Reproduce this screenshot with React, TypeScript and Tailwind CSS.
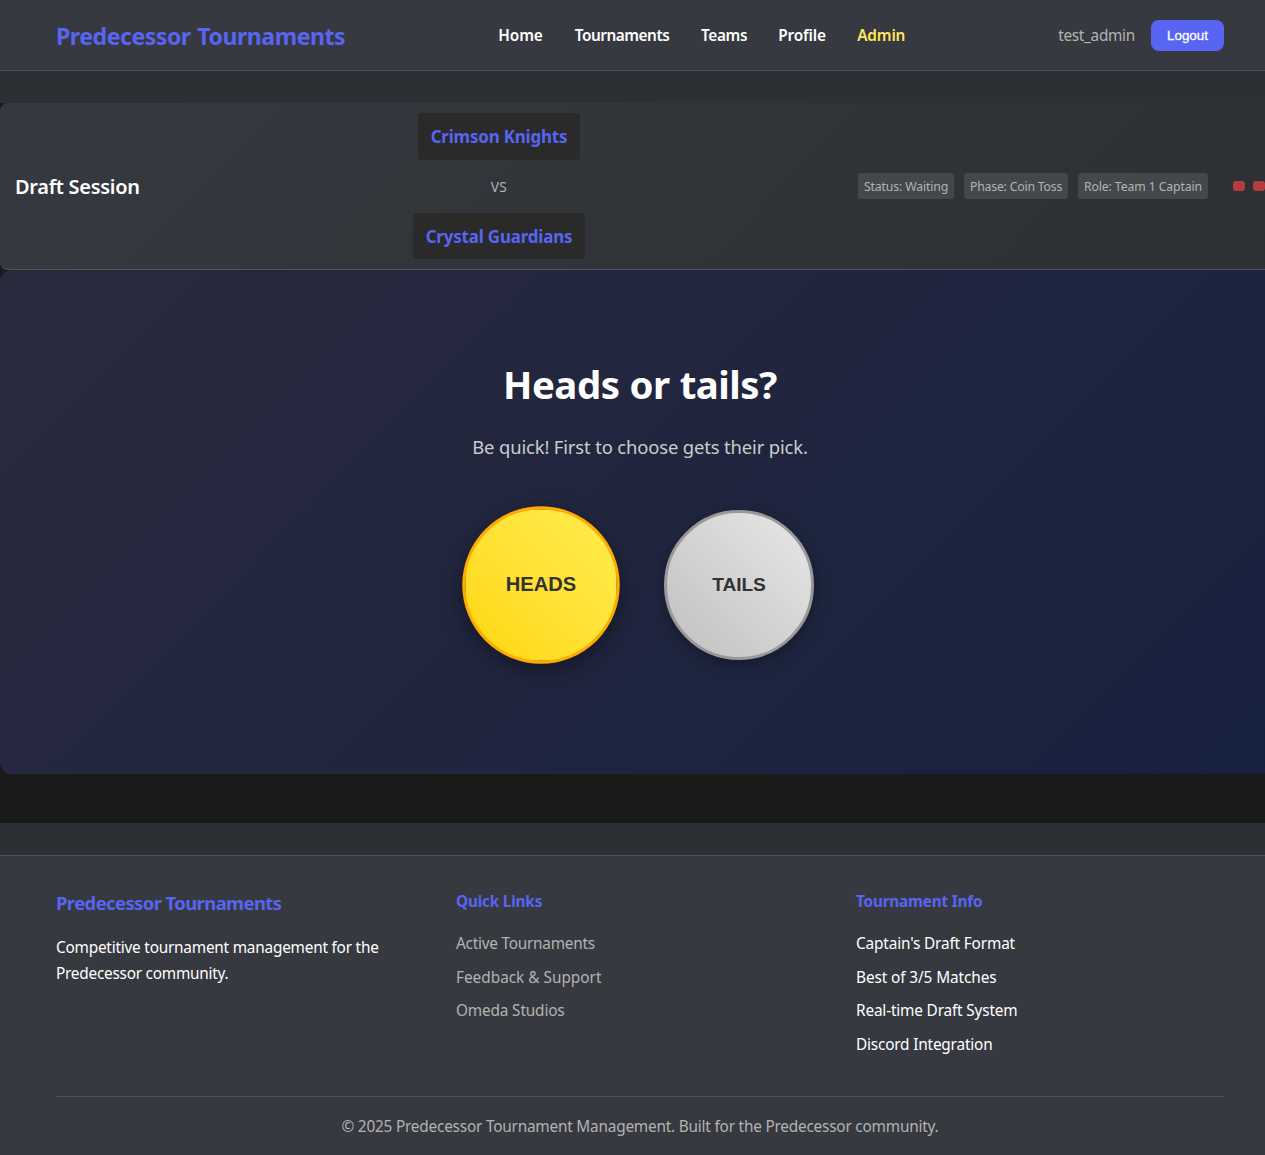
type Item = { text: string; className: string };

const navLinks: Item[] = [
  { text: 'Home', className: 'text-white tracking-[-0.105px] w-[44.4px]' },
  { text: 'Tournaments', className: 'text-white tracking-[-0.47px] w-[94.4px]' },
  { text: 'Teams', className: 'text-white tracking-[-0.39px] w-[45.2px]' },
  { text: 'Profile', className: 'text-white tracking-[-0.166px] w-[46.9px]' },
  { text: 'Admin', className: 'text-[#fee75c] tracking-[-0.15px] w-[47.7px]' },
];

const statuses: Item[] = [
  { text: 'Status: Waiting', className: 'w-[96px] tracking-[-0.155px]' },
  { text: 'Phase: Coin Toss', className: 'w-[104px] tracking-[-0.212px]' },
  { text: 'Role: Team 1 Captain', className: 'w-[130px] tracking-[-0.123px]' },
];

const quickLinks: Item[] = [
  { text: 'Active Tournaments', className: 'tracking-[-0.24px]' },
  { text: 'Feedback & Support', className: 'tracking-[-0.01px]' },
  { text: 'Omeda Studios', className: 'tracking-[-0.16px]' },
];

const info: Item[] = [
  { text: "Captain's Draft Format", className: 'tracking-[-0.155px]' },
  { text: 'Best of 3/5 Matches', className: 'tracking-[-0.1px]' },
  { text: 'Real-time Draft System', className: 'tracking-[-0.165px]' },
  { text: 'Discord Integration', className: 'tracking-[-0.185px]' },
];

function SiteHeader() {
  return (
    <header className="h-[71px] border-b border-[#4f545c] bg-[#36393f]">
      <div className="mx-auto flex h-[70px] w-[1168px] items-center justify-between pt-px">
        <div className="w-[289px] text-[23.04px] leading-[38px] font-bold tracking-[-0.45px] [word-spacing:1px] whitespace-nowrap text-[#5865f2]">
          Predecessor Tournaments
        </div>
        <nav className="flex gap-8 text-[15.36px] leading-[26px] font-semibold">
          {navLinks.map((l) => (
            <a key={l.text} className={l.className}>{l.text}</a>
          ))}
        </nav>
        <div className="flex items-center gap-4">
          <span className="text-[15.36px] leading-[26px] tracking-[-0.3px] text-[#b3b3b3]">test_admin</span>
          <button className="h-[31px] w-[73px] rounded-lg bg-[#5865f2] font-['Liberation_Sans',sans-serif] text-[13.33px] font-medium text-white [-webkit-text-stroke:0.3px_white]">
            Logout
          </button>
        </div>
      </div>
    </header>
  );
}

function DraftHeader() {
  return (
    <section className="flex h-[167px] items-center justify-between rounded-lg border-b border-[#4f545c] bg-linear-135 from-[#36393f] to-[#2c2f33] px-[15px]">
      <h1 className="w-[125px] pt-0.5 text-[19.97px] leading-8 font-semibold tracking-[-0.27px] whitespace-nowrap text-white">Draft Session</h1>
      <div className="flex flex-col items-center gap-[15px] font-bold text-[#5865f2]">
        <div className="flex h-[46.5px] w-[162px] items-center justify-center rounded bg-[#2a2a2a] text-[16.9px] tracking-[-0.153px]">
          Crimson Knights
        </div>
        <span className="text-[13.8px] leading-[23px] font-normal tracking-[0.4px] text-[#b3b3b3]">VS</span>
        <div className="flex h-[46.5px] w-[172px] items-center justify-center rounded bg-[#2a2a2a] pt-px text-[16.9px] tracking-[-0.147px]">
          Crystal Guardians
        </div>
      </div>
      <div className="flex items-center gap-[25px]">
        <div className="flex gap-2.5 text-[12.29px] text-[#b3b3b3]">
          {statuses.map((s) => (
            <span key={s.text} className={`flex h-[26px] items-center justify-center rounded-[3px] bg-[#44474b] pt-0.5 whitespace-nowrap ${s.className}`}>
              {s.text}
            </span>
          ))}
        </div>
        <div className="flex gap-2">
          <span className="h-2.5 w-3 rounded-[3px] bg-[#b53c3e]" />
          <span className="h-2.5 w-3 rounded-[3px] bg-[#b53c3e]" />
        </div>
      </div>
    </section>
  );
}

function CoinToss() {
  return (
    <section className="flex h-[504px] flex-col items-center rounded-xl bg-linear-135 from-[#2a2a3e] to-[#16213e] pt-[82px]">
      <h2 className="text-[38.4px] leading-[64px] font-bold tracking-[-0.48px] [word-spacing:0.5px] text-white">Heads or tails?</h2>
      <p className="mt-[15px] text-[18.43px] leading-[31px] tracking-[-0.145px] text-[#cccccc]">
        Be quick! First to choose gets their pick.
      </p>
      <div className="mt-12 flex gap-12 font-['Liberation_Sans',sans-serif] text-[19.2px] font-bold text-[#333333]">
        <button className="size-[150px] scale-105 rounded-full border-[3px] border-[#ffaa00] bg-linear-45 from-[#ffd700] to-[#ffed4e] shadow-[0_6px_20px_rgba(0,0,0,0.4)]">
          HEADS
        </button>
        <button className="size-[150px] rounded-full border-[3px] border-[#999999] bg-linear-45 from-[#c0c0c0] to-[#e8e8e8] tracking-[-0.15px] shadow-[0_4px_15px_rgba(0,0,0,0.3)]">
          TAILS
        </button>
      </div>
    </section>
  );
}

function SiteFooter() {
  return (
    <footer className="h-[300px] border-t border-[#4f545c] bg-[#36393f] text-[15.36px] text-white">
      <div className="mx-auto w-[1168px] pt-8">
        <div className="grid h-[208px] grid-cols-3 gap-8">
          <div>
            <h3 className="text-[18.43px] leading-[29px] font-bold tracking-[-0.58px] text-[#5865f2]">Predecessor Tournaments</h3>
            <p className="mt-[18px] leading-[26px]">
              <span className="block tracking-[-0.22px]">Competitive tournament management for the</span>
              <span className="block tracking-[-0.24px]">Predecessor community.</span>
            </p>
          </div>
          <div className="pt-px">
            <h4 className="leading-[26px] font-bold tracking-[-0.22px] text-[#5865f2]">Quick Links</h4>
            <ul className="mt-4 text-[#b3b3b3]">
              {quickLinks.map((l) => (
                <li key={l.text} className={`mb-2 leading-[25.6px] ${l.className}`}>{l.text}</li>
              ))}
            </ul>
          </div>
          <div className="pt-px">
            <h4 className="leading-[26px] font-bold tracking-[-0.22px] text-[#5865f2]">Tournament Info</h4>
            <ul className="mt-4">
              {info.map((l) => (
                <li key={l.text} className={`mb-2 leading-[25.6px] ${l.className}`}>{l.text}</li>
              ))}
            </ul>
          </div>
        </div>
        <div className="border-t border-[#4f545c] pt-[17px] text-center leading-[26px] tracking-[-0.209px] text-[#b3b3b3]">
          © 2025 Predecessor Tournament Management. Built for the Predecessor community.
        </div>
      </div>
    </footer>
  );
}

export default function App() {
  return (
    <div className="h-[1155px] w-full overflow-hidden bg-[#2c2f33]">
      <div className="w-[1280px] font-['Noto_Sans',sans-serif]">
        <SiteHeader />
        <main className="my-8 bg-[#1a1a1a] pb-[49px]">
          <DraftHeader />
          <CoinToss />
        </main>
        <SiteFooter />
      </div>
    </div>
  );
}
